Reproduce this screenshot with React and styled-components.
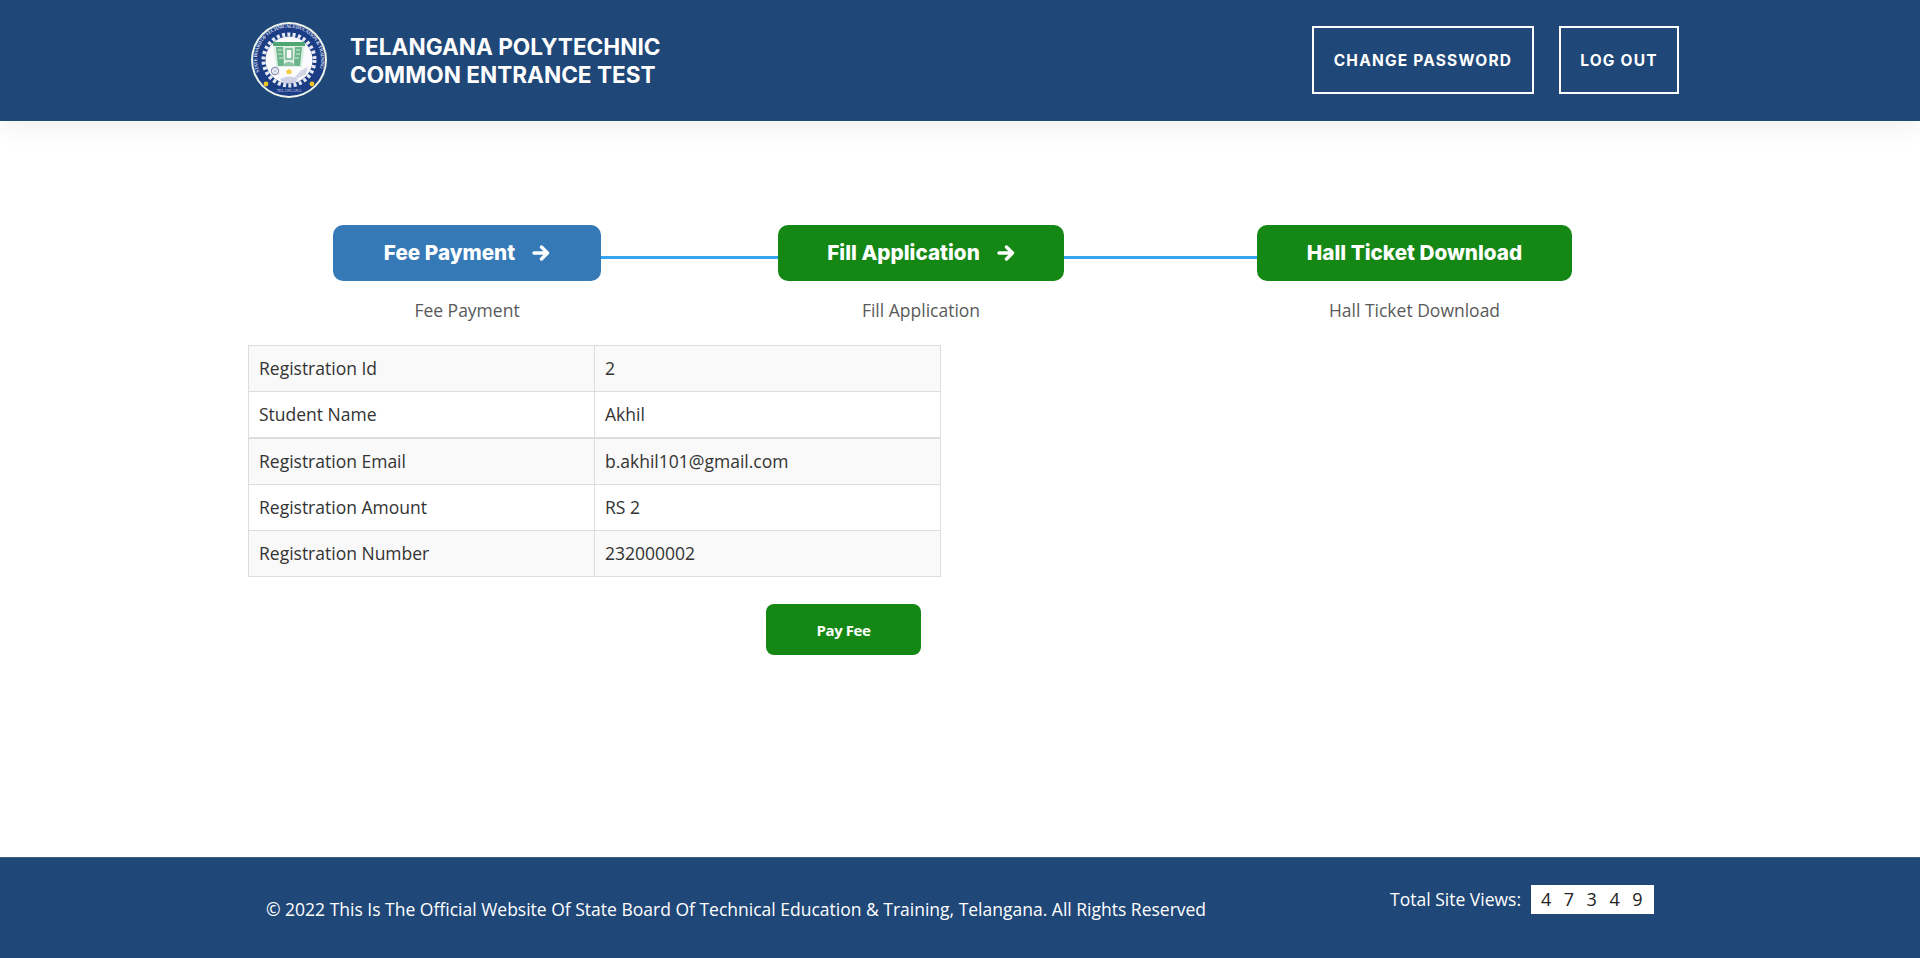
import React from 'react';
import styled, { createGlobalStyle } from 'styled-components';

const GlobalStyle = createGlobalStyle`
  html, body {
    margin: 0;
    padding: 0;
    background: #fff;
    font-family: 'Open Sans', 'Liberation Sans', sans-serif;
  }
  * { box-sizing: border-box; }
`;

const Page = styled.div`
  height: 958px;
  display: flex;
  flex-direction: column;
  overflow: hidden;
`;

// header
const Header = styled.header`
  height: 121px;
  flex: none;
  background: #1f4778;
  box-shadow: 0 8px 24px rgba(0, 0, 0, 0.06);
  display: flex;
  align-items: center;
  justify-content: space-between;
  padding: 0 241px 1px 251px;
`;

const Brand = styled.div`
  display: flex;
  align-items: center;
  gap: 23px;
`;

const BrandTitle = styled.h1`
  margin: 1px 0 0;
  color: #fff;
  font-family: Inter, 'Liberation Sans', sans-serif;
  font-size: 22.6px;
  line-height: 28px;
  font-weight: 700;
`;

const HeaderActions = styled.div`
  display: flex;
  gap: 25px;
`;

const OutlineButton = styled.a`
  height: 68px;
  width: ${({ $w }) => $w}px;
  display: flex;
  align-items: center;
  justify-content: center;
  border: 2px solid #fff;
  color: #fff;
  font-family: Inter, 'Liberation Sans', sans-serif;
  font-size: 15.5px;
  font-weight: 700;
  letter-spacing: 1.2px;
`;

// steps
const Main = styled.main`
  flex: 1;
  padding: 104px 0 0 248px;
`;

const Steps = styled.div`
  display: flex;
  align-items: flex-start;
  padding-left: 85px;
`;

const Step = styled.div`
  width: ${({ $w }) => $w}px;
  display: flex;
  flex-direction: column;
  align-items: center;
`;

const StepButton = styled.div`
  width: 100%;
  height: 56px;
  padding-bottom: 1px;
  border-radius: 10px;
  background: ${({ $bg }) => $bg};
  color: #fff;
  display: flex;
  align-items: center;
  justify-content: center;
  gap: 17px;
  font-family: Inter, 'Liberation Sans', sans-serif;
  font-size: 20.7px;
  font-weight: 800;
`;

const StepLabel = styled.div`
  margin-top: 17px;
  color: #5a5a5a;
  font-size: 17.5px;
  line-height: 24px;
  font-weight: 500;
`;

const Connector = styled.div`
  width: ${({ $w }) => $w}px;
  height: 3px;
  margin-top: 31px;
  background: #35a4ee;
`;

// table
const InfoTable = styled.table`
  width: 693px;
  margin-top: 23px;
  border-collapse: collapse;
  table-layout: fixed;
  color: #333;
  font-size: 17.5px;
  border: 1px solid #ddd;
`;

const Row = styled.tr`
  height: ${({ $tall }) => ($tall ? 47 : 46)}px;
  background: ${({ $odd }) => ($odd ? '#f9f9f9' : '#fff')};
  border-bottom: ${({ $thick }) => ($thick ? 2 : 1)}px solid #ddd;
`;

const Cell = styled.td`
  padding: 0 10px 1px;
  border-left: 1px solid #ddd;
`;

const PayRow = styled.div`
  width: 693px;
  margin-top: 27px;
  padding-left: 518px;
`;

const PayButton = styled.button`
  width: 155px;
  height: 51px;
  border: 0;
  border-radius: 8px;
  background: #148715;
  color: #fff;
  font-family: 'Open Sans', 'Liberation Sans', sans-serif;
  font-size: 15px;
  font-weight: 700;
  letter-spacing: -0.4px;
`;

// footer
const Footer = styled.footer`
  height: 101px;
  flex: none;
  background: #1f4778;
  border-top: 1px solid #3c5f8a;
  color: #fff;
  display: flex;
  align-items: flex-start;
  justify-content: space-between;
  padding: 0 266px;
  font-size: 17.5px;
`;

const Copy = styled.div`
  margin-top: 39px;
  line-height: 24px;
`;

const Views = styled.div`
  margin-top: 27px;
  display: flex;
  align-items: center;
  gap: 10px;
  line-height: 29px;
`;

const Counter = styled.div`
  width: 123px;
  height: 29px;
  padding-left: 10px;
  background: #fff;
  color: #222;
  font-size: 18px;
  letter-spacing: 12.5px;
  white-space: nowrap;
`;

const Emblem = () => (
  <svg width="76" height="76" viewBox="0 0 76 76">
    <defs>
      <path id="emblem-arc" d="M 8.5 50 A 32 32 0 1 1 67.5 50" />
    </defs>
    <circle cx="38" cy="38" r="38" fill="#eef4e8" />
    <circle cx="38" cy="38" r="36" fill="#1b3d86" />
    <text fontFamily="'Liberation Serif', serif" fontSize="5" fontWeight="700" fill="#d5daea" textLength="122">
      <textPath href="#emblem-arc">STATE BOARD OF TECHNICAL EDUCATION &amp; TRAINING</textPath>
    </text>
    <circle cx="38" cy="38" r="25.5" fill="none" stroke="#e6e9f3" strokeWidth="4" strokeDasharray="3 2.35" />
    <circle cx="38" cy="38" r="23.5" fill="#fbfbfd" />
    <path d="M22 21 H54 L51 45 H25 Z" fill="#dcefe2" />
    <path d="M22 20 H54 V24 H22 Z" fill="#4fa673" />
    <path d="M25 25 H32 L33 44 H27 Z M44 25 H51 L49 44 H43 Z" fill="#6bb388" />
    <path d="M27 28 H31 M27 32 H31 M28 36 H32 M45 28 H49 M45 32 H49 M44 36 H48" stroke="#dcefe2" strokeWidth="1" />
    <path d="M35 27 H41 V37 H35 Z" fill="#fff" stroke="#6bb388" strokeWidth="1.4" />
    <path d="M31 44 Q38 36 45 44 Z" fill="#8cc3a4" />
    <circle cx="24" cy="49" r="3.6" fill="none" stroke="#8d90b8" strokeWidth="1.1" />
    <path d="M24 45 V53 M20.5 47 L27.5 51 M20.5 51 L27.5 47" stroke="#a5a8c8" strokeWidth="0.5" />
    <path d="M44 55 Q50 47 57 45 L55 52 Q50 56 44 57 Z" fill="#d4d6e8" />
    <path d="M29 57 Q38 52 47 57 L44 61 H32 Z" fill="#cdd0e6" />
    <path d="M35 49 L38 47 L41 49 L40 52 H36 Z" fill="#f3cd48" />
    <circle cx="15" cy="62" r="2.4" fill="#f2c420" />
    <circle cx="61" cy="62" r="2.4" fill="#f2c420" />
    <text x="38" y="70" textAnchor="middle" fontFamily="'Liberation Serif', serif" fontSize="4" fill="#d5daea">TELANGANA</text>
  </svg>
);

const Arrow = () => (
  <svg width="18" height="18" viewBox="0 0 18 18" fill="none" stroke="#fff" strokeWidth="3.4" strokeLinecap="round" strokeLinejoin="round">
    <path d="M2 9 H15 M9.5 3 L15.5 9 L9.5 15" />
  </svg>
);

const rows = [
  ['Registration Id', '2'],
  ['Student Name', 'Akhil'],
  ['Registration Email', 'b.akhil101@gmail.com'],
  ['Registration Amount', 'RS 2'],
  ['Registration Number', '232000002'],
];

const App = () => (
  <Page>
    <GlobalStyle />
    <Header>
      <Brand>
        <Emblem />
        <BrandTitle>
          TELANGANA POLYTECHNIC
          <br />
          COMMON ENTRANCE TEST
        </BrandTitle>
      </Brand>
      <HeaderActions>
        <OutlineButton $w={222}>CHANGE PASSWORD</OutlineButton>
        <OutlineButton $w={120}>LOG OUT</OutlineButton>
      </HeaderActions>
    </Header>

    <Main>
      <Steps>
        <Step $w={268}>
          <StepButton $bg="#3579b7">Fee Payment <Arrow /></StepButton>
          <StepLabel>Fee Payment</StepLabel>
        </Step>
        <Connector $w={177} />
        <Step $w={286}>
          <StepButton $bg="#148715">Fill Application <Arrow /></StepButton>
          <StepLabel>Fill Application</StepLabel>
        </Step>
        <Connector $w={193} />
        <Step $w={315}>
          <StepButton $bg="#148715">Hall Ticket Download</StepButton>
          <StepLabel>Hall Ticket Download</StepLabel>
        </Step>
      </Steps>

      <InfoTable>
        <tbody>
          {rows.map(([label, value], i) => (
            <Row key={label} $odd={i % 2 === 0} $thick={i === 1} $tall={i === 2}>
              <Cell>{label}</Cell>
              <Cell>{value}</Cell>
            </Row>
          ))}
        </tbody>
      </InfoTable>

      <PayRow>
        <PayButton>Pay Fee</PayButton>
      </PayRow>
    </Main>

    <Footer>
      <Copy>© 2022 This Is The Official Website Of State Board Of Technical Education &amp; Training, Telangana. All Rights Reserved</Copy>
      <Views>
        Total Site Views:
        <Counter>47349</Counter>
      </Views>
    </Footer>
  </Page>
);

export default App;
